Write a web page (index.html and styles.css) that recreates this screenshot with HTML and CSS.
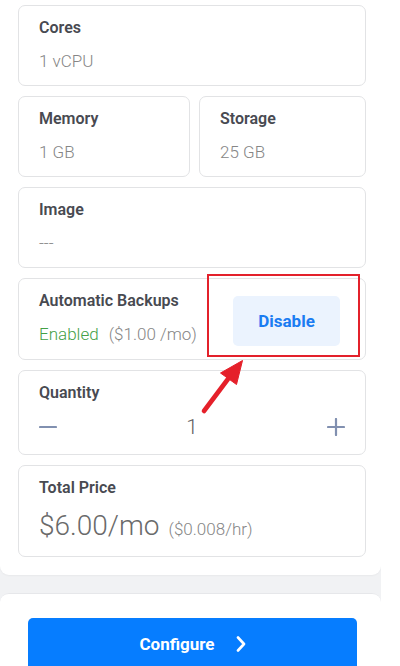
FILE: index.html
```html
<!DOCTYPE html>
<html lang="en">
<head>
<meta charset="utf-8">
<title>Server summary</title>
<link rel="stylesheet" href="styles.css">
</head>
<body>
<div class="page">
  <section class="panel summary">
    <div class="card">
      <div class="label">Cores</div>
      <div class="value">1 vCPU</div>
    </div>
    <div class="pair">
      <div class="card">
        <div class="label">Memory</div>
        <div class="value">1 GB</div>
      </div>
      <div class="card">
        <div class="label">Storage</div>
        <div class="value">25 GB</div>
      </div>
    </div>
    <div class="card">
      <div class="label">Image</div>
      <div class="value">---</div>
    </div>
    <div class="card backups">
      <div class="backups-info">
        <div class="label">Automatic Backups</div>
        <div class="value"><span class="enabled">Enabled</span><span class="backup-price">($1.00 /mo)</span></div>
      </div>
      <button class="btn-disable" type="button">Disable</button>
      <div class="highlight"></div>
    </div>
    <div class="card quantity">
      <div class="label">Quantity</div>
      <div class="stepper">
        <svg class="step minus" width="18" height="18" viewBox="0 0 18 18"><path d="M1 9H17" stroke="#8190b0" stroke-width="2.2" stroke-linecap="round"/></svg>
        <span class="qty">1</span>
        <svg class="step plus" width="18" height="18" viewBox="0 0 18 18"><path d="M1 9H17M9 1V17" stroke="#8190b0" stroke-width="2.2" stroke-linecap="round"/></svg>
      </div>
    </div>
    <div class="card total">
      <div class="label">Total Price</div>
      <div class="price"><span class="price-main">$6.00/mo</span><span class="price-hour">($0.008/hr)</span></div>
    </div>
  </section>
  <section class="panel footer">
    <button class="btn-configure" type="button">
      <span>Configure</span>
      <svg width="10" height="16" viewBox="0 0 10 16"><path d="M2 1.5L8 8L2 14.5" fill="none" stroke="#ffffff" stroke-width="2.6" stroke-linecap="round" stroke-linejoin="round"/></svg>
    </button>
  </section>
  <svg class="arrow" width="55" height="65" viewBox="0 0 55 65">
    <path d="M9 56L33 24" stroke="#e5202a" stroke-width="4.6" stroke-linecap="round"/>
    <path d="M47.5 5.5L25.5 18L41.5 29.5Z" fill="#e5202a" stroke="#e5202a" stroke-width="1" stroke-linejoin="round"/>
  </svg>
</div>
</body>
</html>
```
FILE: styles.css
```css
* { box-sizing: border-box; }

html, body {
  margin: 0;
  padding: 0;
  background: #ffffff;
  font-family: Roboto, "Liberation Sans", Arial, sans-serif;
}

.page {
  position: relative;
  width: 381px;
  height: 666px;
  overflow: hidden;
  background: #f1f2f4;
  display: flex;
  flex-direction: column;
  gap: 18px;
}

.panel {
  background: #ffffff;
}

.summary {
  padding: 5px 15px 18px 18px;
  border-radius: 0 0 9px 9px;
  box-shadow: 0 1px 2px rgba(0, 0, 0, 0.04);
  display: flex;
  flex-direction: column;
  gap: 10px;
}

.pair {
  display: grid;
  grid-template-columns: 172px 1fr;
  gap: 9px;
}

.card {
  border: 1px solid #e2e3e5;
  border-radius: 7px;
  padding: 12px 20px 13px 20px;
  background: #ffffff;
}

.label {
  font-size: 16px;
  line-height: 20px;
  font-weight: 600;
  color: #484a51;
}

.value {
  margin-top: 12px;
  font-size: 17px;
  line-height: 22px;
  font-weight: 300;
  color: #868686;
}

.backups {
  position: relative;
  display: flex;
  justify-content: space-between;
  align-items: flex-start;
  padding-right: 25px;
}

.enabled {
  color: #43a047;
}

.backup-price {
  margin-left: 10px;
}

.btn-disable {
  margin-top: 5px;
  width: 107px;
  height: 50px;
  border: none;
  border-radius: 5px;
  background: #ebf3fe;
  color: #1a7cf2;
  font-family: Roboto, "Liberation Sans", Arial, sans-serif;
  font-size: 17px;
  font-weight: 700;
  padding: 0;
}

.highlight {
  position: absolute;
  left: 188px;
  top: -5px;
  width: 153px;
  height: 83px;
  border: 2px solid #e3212b;
}

.quantity {
  padding-bottom: 12px;
}

.stepper {
  margin-top: 9px;
  height: 30px;
  display: grid;
  grid-template-columns: 1fr auto 1fr;
  align-items: center;
}

.step.minus { justify-self: start; }
.step.plus { justify-self: end; }

.qty {
  font-size: 21px;
  font-weight: 300;
  color: #5f5f5f;
  line-height: 30px;
}

.total {
  padding-bottom: 10px;
}

.price {
  margin-top: 11px;
  line-height: 34px;
  display: flex;
  align-items: baseline;
}

.price-main {
  font-size: 28px;
  font-weight: 300;
  color: #6a6a6a;
}

.price-hour {
  margin-left: 9px;
  font-size: 17px;
  font-weight: 300;
  color: #868686;
}

.footer {
  flex: 1;
  border-top: 1px solid #e6e7ea;
  border-radius: 9px 9px 0 0;
  padding: 24px 24px 0 28px;
}

.btn-configure {
  width: 100%;
  height: 52px;
  border: none;
  border-radius: 5px;
  background: #067dff;
  color: #ffffff;
  font-family: Roboto, "Liberation Sans", Arial, sans-serif;
  font-size: 17px;
  font-weight: 700;
  display: flex;
  align-items: center;
  justify-content: center;
  gap: 21px;
  padding: 0;
}

.arrow {
  position: absolute;
  left: 195px;
  top: 355px;
}
```
